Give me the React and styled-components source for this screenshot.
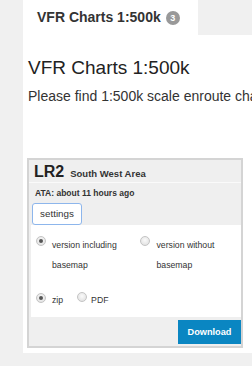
import React from "react";
import styled, { createGlobalStyle } from "styled-components";

const GlobalStyle = createGlobalStyle`
  html, body {
    margin: 0;
    padding: 0;
    overflow: hidden;
    background: #f0f0f0;
    font-family: "Liberation Sans", Arial, sans-serif;
  }
`;

const Page = styled.div`
  padding-left: 23px;
  width: 800px;
`;

const TabBar = styled.div`
  display: flex;
  height: 35px;
`;

const Tab = styled.div`
  width: 161px;
  padding-left: 14px;
  background: #fff;
  display: flex;
  align-items: center;
  gap: 5px;
  font-size: 14px;
  font-weight: bold;
  line-height: 35px;
  color: #333;
`;

const Badge = styled.span`
  width: 14px;
  height: 14px;
  border-radius: 50%;
  background: #999;
  color: #fff;
  font-size: 9px;
  line-height: 14px;
  text-align: center;
`;

const Panel = styled.div`
  background: #fff;
  padding: 22px 5px 5px;
`;

const Heading = styled.h1`
  margin: 0;
  font-size: 19px;
  line-height: 22px;
  font-weight: normal;
  color: #222;
`;

const Lead = styled.p`
  margin: 9px 0 0;
  font-size: 14px;
  line-height: 16px;
  color: #333;
  white-space: nowrap;
`;

const Card = styled.div`
  box-sizing: border-box;
  width: 216px;
  margin: 54px 0 0 -1px;
  border: 2px solid #d4d4d4;
  background: #efefef;
`;

const CardHeader = styled.div`
  display: flex;
  align-items: baseline;
  gap: 6px;
  padding: 2px 5px 0;
  height: 20px;
  line-height: 20px;
  border-bottom: 1px solid #fafafa;
  color: #222;
`;

const Code = styled.span`
  font-size: 16px;
  font-weight: bold;
`;

const Area = styled.span`
  font-size: 9.5px;
  font-weight: bold;
  color: #333;
`;

const Meta = styled.div`
  padding: 4px 6px 0;
  font-size: 8.5px;
  line-height: 12px;
  font-weight: bold;
  color: #333;
`;

const SettingsTab = styled.div`
  box-sizing: border-box;
  margin: 4px 0 0 3px;
  width: 50px;
  height: 22px;
  border: 1px solid #8db6ec;
  border-radius: 3px;
  background: #fff;
  font-size: 9.8px;
  line-height: 20px;
  text-align: center;
  color: #333;
`;

const Options = styled.div`
  margin-left: 2px;
  padding: 10px 5px 7px;
  background: #fff;
`;

const Row = styled.div`
  display: flex;
  margin-top: ${(p) => p.$gap || 0}px;
`;

const Option = styled.label`
  display: flex;
  align-items: flex-start;
  gap: ${(p) => (p.$tight ? 4 : 6)}px;
  width: ${(p) => (p.$width ? p.$width + "px" : "auto")};
  margin-right: ${(p) => p.$mr || 0}px;
  font-size: 8.7px;
  line-height: 20px;
  color: #333;
`;

const Radio = styled.span`
  flex: none;
  box-sizing: border-box;
  width: 10px;
  height: 10px;
  margin-top: ${(p) => p.$top}px;
  border-radius: 50%;
  border: 1px solid #c4c4c4;
  background: radial-gradient(circle at 50% 40%, #fafafa, #dcdcdc);
  display: grid;
  place-items: center;

  &::after {
    content: "";
    width: 4px;
    height: 4px;
    border-radius: 50%;
    background: ${(p) => (p.$checked ? "#555" : "transparent")};
  }
`;

const Footer = styled.div`
  display: flex;
  justify-content: flex-end;
  padding: 3px 0 2px;
`;

const Button = styled.button`
  width: 63px;
  height: 24px;
  border: none;
  background: #0a86c2;
  color: #fff;
  font-family: inherit;
  font-size: 9.2px;
  font-weight: bold;
  padding: 0;
`;

export default function App() {
  return (
    <>
      <GlobalStyle />
      <Page>
        <TabBar>
          <Tab>
            VFR Charts 1:500k
            <Badge>3</Badge>
          </Tab>
        </TabBar>
        <Panel>
          <Heading>VFR Charts 1:500k</Heading>
          <Lead>Please find 1:500k scale enroute charts for Poland below.</Lead>
          <Card>
            <CardHeader>
              <Code>LR2</Code>
              <Area>South West Area</Area>
            </CardHeader>
            <Meta>ATA: about 11 hours ago</Meta>
            <SettingsTab>settings</SettingsTab>
            <Options>
              <Row>
                <Option $width={105}>
                  <Radio $checked $top={1} />
                  <span>version including basemap</span>
                </Option>
                <Option $width={96}>
                  <Radio $top={1} />
                  <span>version without basemap</span>
                </Option>
              </Row>
              <Row $gap={15}>
                <Option $mr={14}>
                  <Radio $checked $top={3} />
                  <span>zip</span>
                </Option>
                <Option $tight>
                  <Radio $top={2} />
                  <span>PDF</span>
                </Option>
              </Row>
            </Options>
            <Footer>
              <Button>Download</Button>
            </Footer>
          </Card>
        </Panel>
      </Page>
    </>
  );
}
